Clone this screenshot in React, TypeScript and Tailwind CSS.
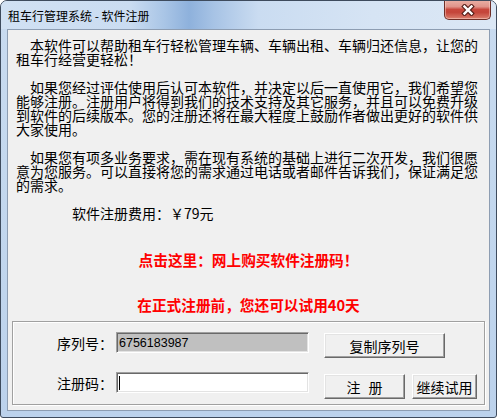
import React from "react";

function CloseButton() {
  return (
    <div className="-mt-px w-[47px] h-[20px] rounded-b-[5px] border border-t-0 border-[#6e2e27] bg-[linear-gradient(180deg,#eab1a6_0%,#e0948a_35%,#c8473c_50%,#c4453a_65%,#d46d5e_90%,#e08a78_100%)] shadow-[inset_0_0_0_1px_rgba(255,220,210,0.45)] flex items-center justify-center">
      <svg width="14" height="12" viewBox="0 0 14 12">
        <path d="M3.5 2.5 L10.5 9.5 M10.5 2.5 L3.5 9.5" stroke="#5a231d" strokeWidth="4.6" strokeLinecap="square" />
        <path d="M3.5 2.5 L10.5 9.5 M10.5 2.5 L3.5 9.5" stroke="#ffffff" strokeWidth="2.4" strokeLinecap="square" />
      </svg>
    </div>
  );
}

function Button({ children, w }: { children: React.ReactNode; w: string }) {
  return (
    <div
      className={`${w} h-[25px] flex items-center justify-center border border-t-white border-l-white border-b-[#696969] border-r-[#696969] bg-[#f0f0f0] shadow-[inset_-1px_-1px_0_#a0a0a0,inset_1px_1px_0_#e3e3e3] text-[14px] leading-[14px] text-black`}
    >
      {children}
    </div>
  );
}

export default function App() {
  return (
    <div className="w-[497px] h-[418px] overflow-hidden font-['Noto_Sans_CJK_SC',sans-serif] bg-white">
      <div className="w-full h-full flex flex-col rounded-t-[7px] rounded-b-[3px] border border-[#3e4b5d] bg-[linear-gradient(180deg,#c9dbf0_0%,#c4d8ee_40%,#bcd2ec_100%)] overflow-hidden">
        {/* title bar */}
        <div className="h-[28px] flex items-start justify-between pl-[7px] pr-[5px] bg-[linear-gradient(90deg,#d1e1f3_0%,#cadcf1_26%,#a9c5e6_33%,#8eb1dc_38%,#a7c3e5_43%,#cadcf1_52%,#d6e4f4_75%,#dbe7f5_100%)]">
          <div className="mt-[7px] text-[12px] leading-[16px] text-black whitespace-nowrap">
            租车行管理系统 - 软件注册
          </div>
          <CloseButton />
        </div>

        {/* client area */}
        <div className="mx-[6px] h-[382px] flex flex-col border border-[#8d9db2] bg-[#f0f0f0]">
          <div className="pt-[8px] px-[8px] w-[478px] text-[14px] leading-[14px] text-black">
            <p className="indent-[14px]">
              本软件可以帮助租车行轻松管理车辆、车辆出租、车辆归还信息，让您的租车行经营更轻松！
            </p>
            <p className="indent-[14px] mt-[14px]">
              如果您经过评估使用后认可本软件，并决定以后一直使用它，我们希望您能够注册。注册用户将得到我们的技术支持及其它服务，并且可以免费升级到软件的后续版本。您的注册还将在最大程度上鼓励作者做出更好的软件供大家使用。
            </p>
            <p className="indent-[14px] mt-[14px]">
              如果您有项多业务要求，需在现有系统的基础上进行二次开发，我们很愿意为您服务。可以直接将您的需求通过电话或者邮件告诉我们，保证满足您的需求。
            </p>
            <p className="mt-[14px] pl-[56px]">软件注册费用：￥79元</p>
          </div>

          <div className="mt-[32px] h-[16px] flex justify-center text-[14.67px] leading-[16px] font-bold text-[#ff0000] whitespace-nowrap">
            点击这里：网上购买软件注册码！
          </div>
          <div className="mt-[29px] h-[16px] flex justify-center text-[14.67px] leading-[16px] font-bold text-[#ff0000] whitespace-nowrap">
            在正式注册前，您还可以试用40天
          </div>

          {/* group frame */}
          <div className="mt-[8px] ml-[4px] w-[473px] h-[84px] border border-[#a0a0a0] shadow-[inset_1px_1px_0_#ffffff,1px_1px_0_#ffffff] pl-[44px] pt-[10px] flex flex-col gap-[13px]">
            <div className="h-[27px] flex items-start">
              <div className="w-[56px] h-[21px] flex items-center text-[14px] leading-[14px] text-black">序列号：</div>
              <div className="ml-[3px] w-[193px] h-[21px] border border-t-[#a0a0a0] border-l-[#a0a0a0] border-b-white border-r-white bg-[#c0c0c0] shadow-[inset_1px_1px_0_#696969,inset_-1px_-1px_0_#e3e3e3] flex items-center pl-[2px] font-['Liberation_Sans',sans-serif] text-[12.5px] leading-[14px] text-black">
                6756183987
              </div>
              <div className="ml-[15px] mt-[1px]">
                <Button w="w-[121px]">复制序列号</Button>
              </div>
            </div>
            <div className="h-[27px] flex items-start">
              <div className="w-[56px] h-[21px] flex items-center text-[14px] leading-[14px] text-black">注册码：</div>
              <div className="ml-[3px] w-[193px] h-[21px] border border-t-[#a0a0a0] border-l-[#a0a0a0] border-b-white border-r-white bg-white shadow-[inset_1px_1px_0_#696969,inset_-1px_-1px_0_#e3e3e3] flex items-center pl-[2px]">
                <span className="block w-px h-[14px] bg-black" />
              </div>
              <div className="ml-[15px] mt-[2px] flex gap-[7px]">
                <Button w="w-[81px]">
                  <span>注</span>
                  <span className="ml-[8px]">册</span>
                </Button>
                <Button w="w-[65px]">继续试用</Button>
              </div>
            </div>
          </div>
        </div>
      </div>
    </div>
  );
}
